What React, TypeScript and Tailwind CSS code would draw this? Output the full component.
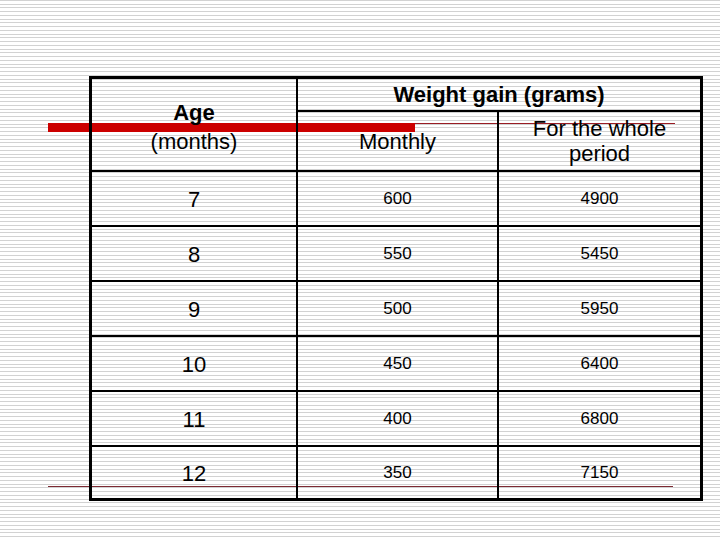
const ROWS = [
  { age: "7", monthly: "600", total: "4900" },
  { age: "8", monthly: "550", total: "5450" },
  { age: "9", monthly: "500", total: "5950" },
  { age: "10", monthly: "450", total: "6400" },
  { age: "11", monthly: "400", total: "6800" },
  { age: "12", monthly: "350", total: "7150" },
];

export default function App() {
  return (
    <div
      className="relative w-[720px] h-[540px] overflow-hidden bg-white bg-[image:repeating-linear-gradient(to_bottom,#d2d2d2_0px,#d2d2d2_1px,#ffffff_1px,#ffffff_3.75px)] text-black"
      style={{ fontFamily: '"Liberation Sans", Arial, sans-serif' }}
    >
      {/* template decorations, drawn under the table borders */}
      <div className="absolute z-0 left-[48px] top-[123px] w-[367px] h-[9px] bg-[#cc0000]" />
      <div className="absolute z-0 left-[415px] top-[123px] w-[260px] h-px bg-[#9a1c24]" />
      <div className="absolute z-0 left-[48px] top-[486px] w-[625px] h-px bg-[#7d2a33]" />

      {/* table */}
      <div className="relative z-10 ml-[89px] pt-[76px]">
        <div className="w-[614px] border-[3px] border-black">
          {/* header */}
          <div className="flex border-b-2 border-black">
            <div className="w-[206px] h-[91px] border-r-2 border-black flex flex-col items-center justify-center pt-[4px] text-[22px] leading-[29px]">
              <span className="font-bold">Age</span>
              <span>(months)</span>
            </div>
            <div className="flex-1 flex flex-col">
              <div className="h-[33px] border-b-2 border-black flex items-center justify-center text-[22px] font-bold">
                Weight gain (grams)
              </div>
              <div className="flex-1 flex">
                <div className="w-[201px] border-r-2 border-black flex items-center justify-center text-[22px] pt-[1px]">
                  Monthly
                </div>
                <div className="flex-1 flex flex-col items-center justify-center text-[22px] leading-[25px]">
                  <span>For the whole</span>
                  <span>period</span>
                </div>
              </div>
            </div>
          </div>

          {/* data rows */}
          {ROWS.map((r, i) => (
            <div
              key={r.age}
              className={
                i < ROWS.length - 1
                  ? "flex h-[55px] border-b-2 border-black"
                  : "flex h-[51px]"
              }
            >
              <div className="w-[206px] border-r-2 border-black flex items-center justify-center text-[22px] pt-[2px]">
                {r.age}
              </div>
              <div className="w-[201px] border-r-2 border-black flex items-center justify-center text-[17px] pt-[1px]">
                {r.monthly}
              </div>
              <div className="flex-1 flex items-center justify-center text-[17px] pt-[1px]">
                {r.total}
              </div>
            </div>
          ))}
        </div>
      </div>
    </div>
  );
}
